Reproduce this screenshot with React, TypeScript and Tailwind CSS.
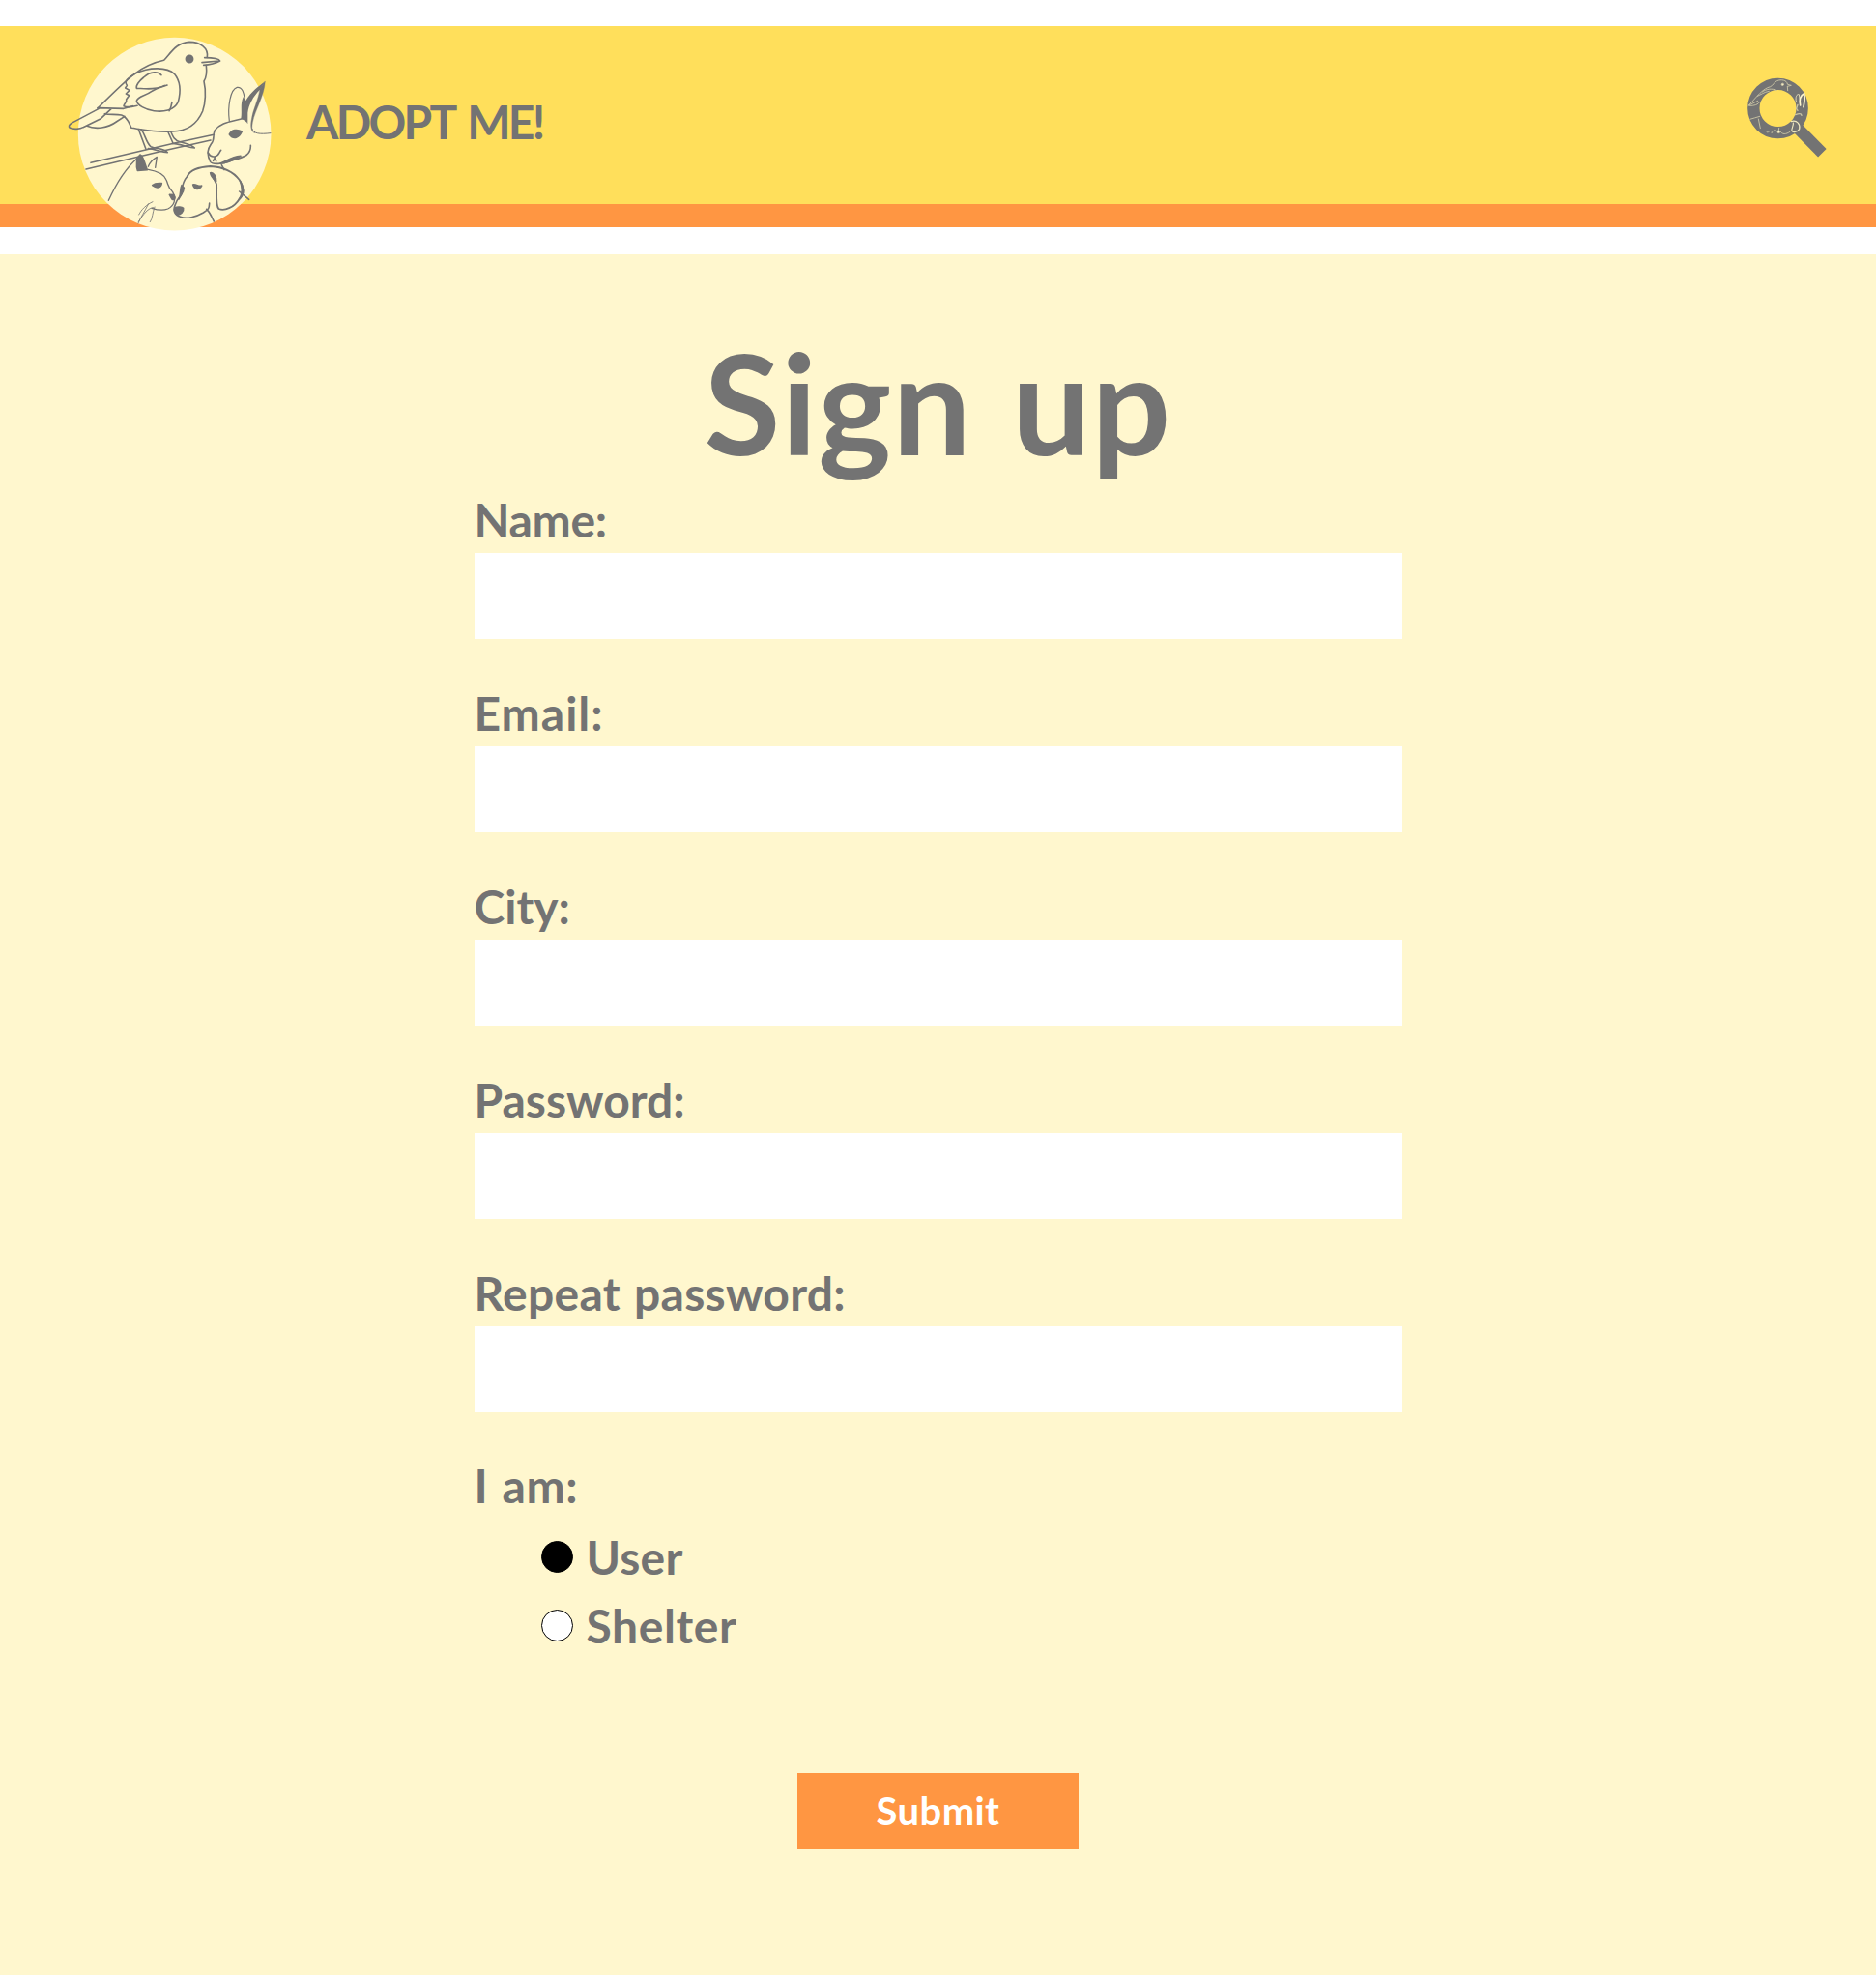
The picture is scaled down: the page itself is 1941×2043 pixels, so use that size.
import { useState } from "react";

const fields = [
  { label: "Name:", type: "text", spacing: "tracking-[-0.3px]" },
  { label: "Email:", type: "email", spacing: "tracking-[1px]" },
  { label: "City:", type: "text", spacing: "tracking-[0px]" },
  { label: "Password:", type: "password", spacing: "tracking-[0px]" },
  { label: "Repeat password:", type: "password", spacing: "tracking-[0.3px] [word-spacing:2px]" },
];

const roles = [
  { label: "User", spacing: "tracking-[0.2px]" },
  { label: "Shelter", spacing: "tracking-[0.6px]" },
];

function Logo() {
  return (
    <svg viewBox="0 21 720 645" className="block h-[215px] w-[240px] shrink-0" fill="none" stroke="#737373" strokeWidth="4.800" strokeLinecap="round" strokeLinejoin="round">
      <circle cx="362" cy="356" r="299.5" fill="#FFF7CE" stroke="none" />
      {/* bird */}
      <path d="M463 118C468 88 440 70 408 70C368 72 352 102 329 127C292 135 262 151 238 169C208 191 170 229 123 276" />
      <path d="M455 119C475 119 500 122 503 129C492 135 470 141 452 142M447 134L501 129" />
      <path d="M460 143C463 168 461 180 453 192C460 222 458 260 449 285C432 325 402 347 355 348C305 351 262 342 228 337C220 323 217 304 197 297C180 294 160 296 145 293" />
      <path d="M238 169C285 146 340 148 361 169C382 194 380 230 373 256C360 284 325 288 298 284C270 280 246 266 244 253C250 236 270 239 290 224C308 212 325 209 339 204" />
      <path d="M331 205C303 220 270 215 244 214C241 206 252 191 266 180C288 159 312 162 321 173M354 257C350 270 352 275 345 284" />
      <path d="M238 170C205 188 208 198 214 205L209 213L222 220L211 231L221 236L212 248C215 258 205 260 204 269C220 276 235 270 246 268" />
      <path d="M123 275L204 277L232 269M127 277L42 322C34 328 32 333 37 337C48 342 68 341 78 335L133 308L165 278M88 330C118 343 155 337 181 318L207 301" />
      <ellipse cx="408" cy="123" rx="11" ry="11" fill="#737373" />
      {/* perch and feet */}
      <path d="M102 445L375 381L484 358M87 465L330 407L474 375" />
      <path d="M250 341L273 403M258 342C270 355 273 382 288 395C306 403 328 399 340 413C320 412 300 402 280 401M341 348L357 384M350 348C357 365 362 377 379 380C398 386 416 388 424 399C404 397 380 387 355 385" />
      {/* rabbit */}
      <path d="M532 316C526 270 535 217 556 211C574 209 577 232 580 248" strokeWidth="3.500" />
      <path d="M568 308C572 285 565 265 575 241L583 252C600 225 620 210 643 193L627 218C605 240 592 265 589 290L589 325C585 315 576 312 568 308Z" fill="#737373" stroke="none" />
      <path d="M643 193C640 240 612 280 604 320C600 345 605 350 612 353C598 350 597 330 601 310C605 280 622 250 627 216Z" fill="#737373" strokeWidth="1" />
      <path d="M603 340C607 355 625 357 660 353" strokeWidth="3" />
      <path d="M572 308C535 318 505 320 487 344C479 360 488 373 475 387C464 403 461 417 473 442C479 451 510 450 533 440C567 429 600 427 598 391" />
      <path d="M504 447C525 440 535 427 567 424C550 434 530 446 504 447Z" fill="#737373" />
      <path d="M466 414C472 425 481 427 488 425C500 423 500 412 506 406M488 426L482 439M486 430L491 440" />
      <path d="M532 357C540 342 556 340 571 348C562 367 546 376 532 357Z" fill="#737373" />
      {/* cat */}
      <path d="M157 562C178 515 206 466 246 431M280 466C305 470 329 481 336 498C344 515 339 518 356 536C368 558 361 578 341 588C324 595 309 592 291 586M280 457C286 440 297 433 307 427L302 460" strokeWidth="4" />
      <path d="M245 431L255 420C266 424 266 442 277 467L247 469C241 455 246 443 245 431Z" fill="#737373" />
      <path d="M293 515C302 507 313 508 322 509C320 523 307 526 293 515ZM346 544L360 545C367 555 361 562 354 558Z" fill="#737373" />
      <path d="M294 566C274 575 259 590 251 606M281 572C269 596 256 616 249 633M296 584C281 584 265 604 250 628M300 582C293 600 294 618 286 629" strokeWidth="2.500" />
      {/* dog */}
      <path d="M402 486C412 464 443 458 473 456C510 458 542 470 563 498C577 519 579 543 563 557C547 584 516 596 499 588C488 578 494 535 492 511L476 478" strokeWidth="5.500" />
      <path d="M402 486C391 499 386 511 384 531C391 544 369 552 364 575C356 592 361 607 380 613C399 620 429 613 451 600C470 587 469 586 470 570M461 589C474 600 477 615 484 627M508 452L516 467M563 534L593 559" />
      <path d="M384 515L391 523C390 540 379 546 375 558C383 539 377 531 384 515ZM473 476C482 474 491 486 491 503C483 496 474 485 473 476ZM566 502C580 526 579 544 562 559C574 539 572 523 566 502Z" fill="#737373" />
      <path d="M419 513C430 511 437 520 446 516C438 530 424 530 419 513Z" fill="#737373" />
      <path d="M363 584C372 580 385 582 389 586C391 597 380 608 370 606C362 600 360 591 363 584Z" fill="#737373" />
    </svg>
  );
}

function SearchIcon() {
  return (
    <svg viewBox="0 0 360 330" className="block h-[110px] w-[120px]" fill="none" stroke="#C9C4A4" strokeWidth="2.800" strokeLinecap="round" strokeLinejoin="round">
      <path d="M212 205L286 280" stroke="#737373" strokeWidth="36" strokeLinecap="butt" />
      <circle cx="148.500" cy="141" r="75.500" stroke="#737373" strokeWidth="37" />
      <path d="M178 65C177 54 158 50 146 56C136 60 134 70 125 74C102 80 86 101 58 132M179 67L190 70L178 73M178 74L179 86M100 90C113 80 132 79 144 85M85 103C96 99 104 91 121 88M58 132L86 118M60 133C74 134 87 130 92 122" />
      <circle cx="163" cy="67" r="3.500" fill="#FFF7CE" />
      <path d="M62 175C72 173 82 168 92 166M88 174L94 203" />
      <path d="M205 119C202 106 207 96 214 98L217 116" stroke="#E5DEB8" />
      <path d="M218 132C214 112 220 100 230 95C234 111 230 125 228 137" stroke="#FFF7CE" strokeWidth="5" />
      <path d="M210 130L206 142L210 148M203 161C213 157 221 156 222 163" strokeWidth="4" />
      <path d="M190 182C208 176 219 192 215 206C208 217 194 216 192 211C190 203 198 194 196 186" strokeWidth="3.500" stroke="#EFE8C0" />
      <path d="M114 214C119 223 119 207 127 212M129 218C136 203 144 209 150 216L152 202M156 213C162 223 173 223 186 214" />
      <circle cx="151" cy="214" r="4" fill="#FFF7CE" />
    </svg>
  );
}

export default function App() {
  const [role, setRole] = useState("User");
  return (
    <div className="flex min-h-[2043px] w-full flex-col bg-white pt-[27px] font-['Lato',sans-serif] font-bold text-[#737373]">
      <header className="flex h-[208px] shrink-0 items-start border-b-[24px] border-[#FF9642] bg-[#FFDF5B] pl-[60px] pr-[31px]">
        <Logo />
        <span className="ml-[17px] mt-[70px] text-[48px] leading-[58px] tracking-[-2.7px] [word-spacing:5px]">ADOPT ME!</span>
        <button type="button" aria-label="Search" className="ml-auto mt-[38px]">
          <SearchIcon />
        </button>
      </header>

      <main className="mt-[28px] flex grow flex-col items-center bg-[#FFF7CE]">
        <h1 className="mt-[66px] text-[144px] leading-[173px] tracking-[1.2px] [word-spacing:5px]">Sign up</h1>
        <form className="flex w-[960px] flex-col" onSubmit={(e) => e.preventDefault()}>
          {fields.map((f) => (
            <label key={f.label} className="mb-[41px] block h-[159px] pt-[7px]">
              <span className={`block h-[63px] text-[48px] leading-[58px] ${f.spacing}`}>{f.label}</span>
              <input type={f.type} className="block h-[89px] w-full bg-white px-4 outline-none" />
            </label>
          ))}
          <span className="mt-[6px] text-[48px] leading-[58px] tracking-[0.6px] [word-spacing:2px]">I am:</span>
          <div className="flex flex-col pl-[69px] pt-[14px]">
            {roles.map((r) => (
              <label key={r.label} className="flex h-[71px] items-start gap-[14px]">
                <input
                  type="radio"
                  name="role"
                  checked={role === r.label}
                  onChange={() => setRole(r.label)}
                  className="mt-[14px] size-[33px] appearance-none rounded-full border border-black bg-white checked:bg-black"
                />
                <span className={`mt-[2px] text-[48px] leading-[58px] ${r.spacing}`}>{r.label}</span>
              </label>
            ))}
          </div>
          <button type="submit" className="mx-auto mt-[112px] h-[79px] w-[291px] bg-[#FF9642] text-[40px] leading-[79px] tracking-[0.4px] text-white">
            Submit
          </button>
        </form>
      </main>
    </div>
  );
}
